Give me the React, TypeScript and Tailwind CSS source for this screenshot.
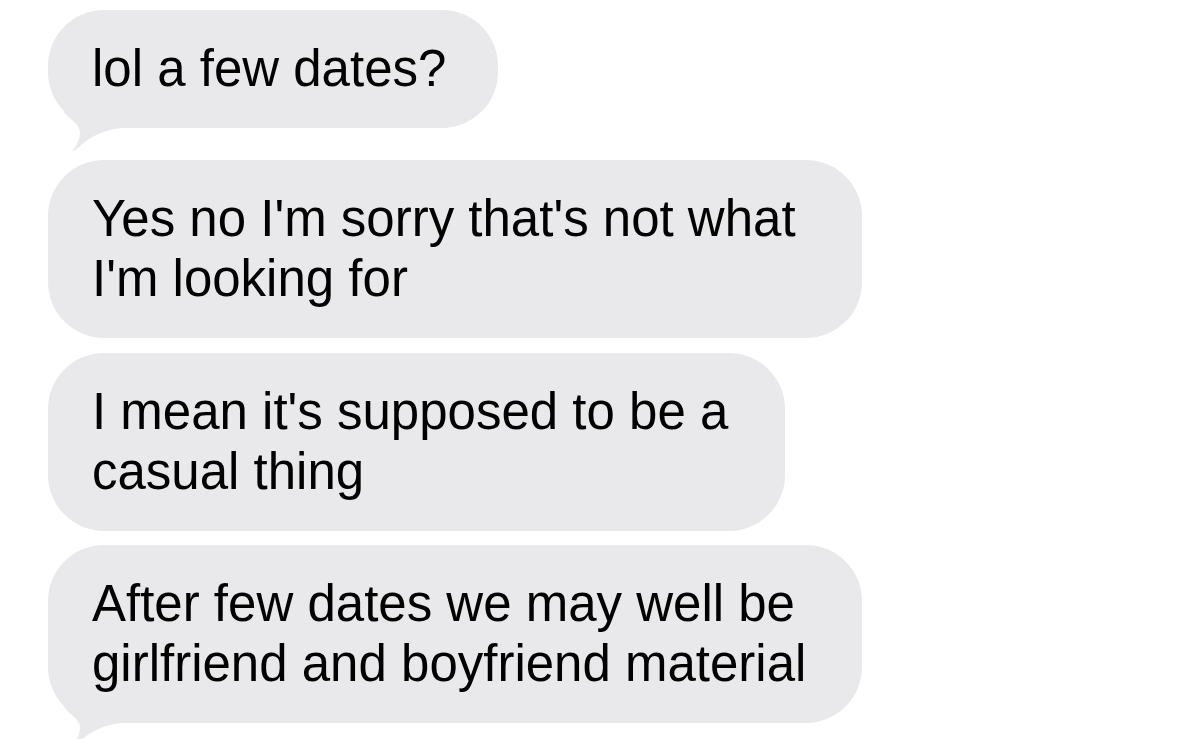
const bubble = 'relative rounded-[56px] bg-[#e9e9eb] py-[29px] pl-[44px] text-[51px] leading-[60px] text-black';

function Tail() {
  return (
    <svg
      className="absolute left-0 bottom-[-24px]"
      width="76"
      height="56"
      viewBox="0 0 76 56"
      fill="#e9e9eb"
    >
      <path d="M22 8 L16 16 C22 24 31 27 32 36 C32 44 28 50 25 54 C25 55 26 55 27 54.5 C36 46 50 34 74 32 L74 8 Z" />
    </svg>
  );
}

export default function App() {
  return (
    <div className="h-[739px] overflow-hidden bg-white font-['Liberation_Sans',Arial,sans-serif]">
      <div className="flex flex-col items-start pl-[48px] pt-[10px]">
        <div className={`${bubble} w-[450px]`}>
          lol a few dates?
          <Tail />
        </div>
        <div className={`${bubble} mt-[32px] w-[814px]`}>
          Yes no I'm sorry that's not what
          <br />
          I'm looking for
        </div>
        <div className={`${bubble} mt-[15px] w-[737px]`}>
          I mean it's supposed to be a
          <br />
          casual thing
        </div>
        <div className={`${bubble} mt-[14px] w-[814px]`}>
          After few dates we may well be
          <br />
          girlfriend and boyfriend material
          <Tail />
        </div>
      </div>
    </div>
  );
}
